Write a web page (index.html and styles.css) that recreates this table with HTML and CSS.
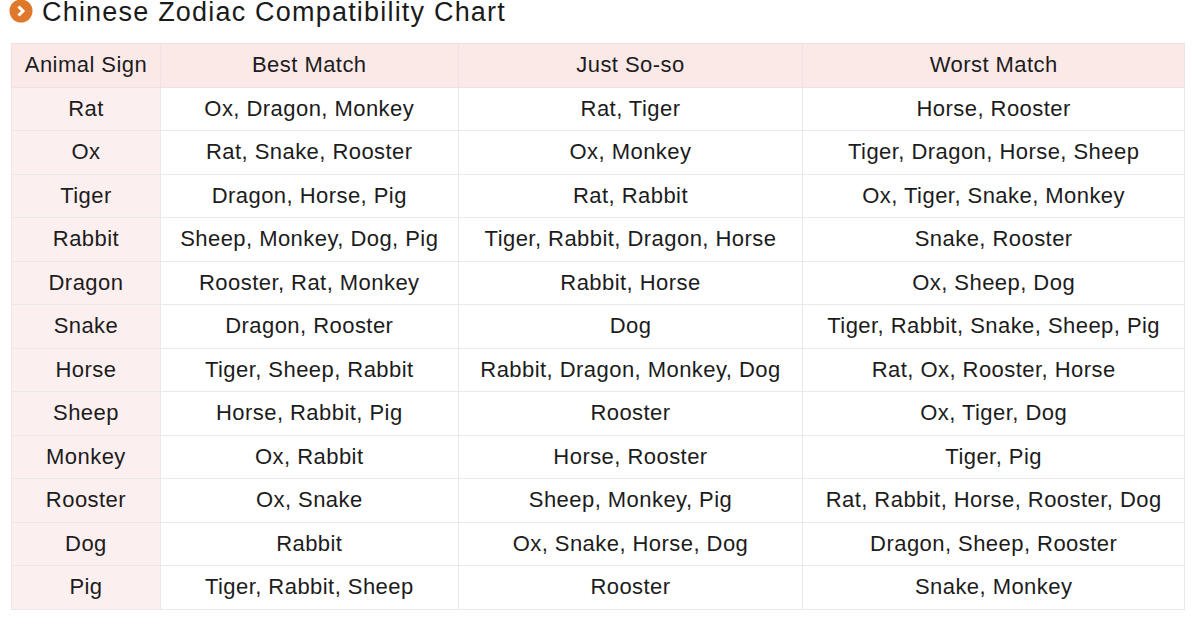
FILE: index.html
```html
<!DOCTYPE html>
<html>
<head>
<meta charset="utf-8">
<link rel="stylesheet" href="styles.css">
</head>
<body>
<div class="page">
  <h2 class="title">
    <svg class="icon" width="24" height="24" viewBox="0 0 24 24"><circle cx="12" cy="12" r="11.5" fill="#e0782c"/><path d="M9.5 7.5 L14 12 L9.5 16.5" fill="none" stroke="#fff" stroke-width="3"/></svg>
    <span>Chinese Zodiac Compatibility Chart</span>
  </h2>
  <table class="chart">
    <colgroup><col class="c1"><col class="c2"><col class="c3"><col class="c4"></colgroup>
    <thead>
      <tr><th>Animal Sign</th><th>Best Match</th><th>Just So-so</th><th>Worst Match</th></tr>
    </thead>
    <tbody>
      <tr><td>Rat</td><td>Ox, Dragon, Monkey</td><td>Rat, Tiger</td><td>Horse, Rooster</td></tr>
      <tr><td>Ox</td><td>Rat, Snake, Rooster</td><td>Ox, Monkey</td><td>Tiger, Dragon, Horse, Sheep</td></tr>
      <tr><td>Tiger</td><td>Dragon, Horse, Pig</td><td>Rat, Rabbit</td><td>Ox, Tiger, Snake, Monkey</td></tr>
      <tr><td>Rabbit</td><td>Sheep, Monkey, Dog, Pig</td><td>Tiger, Rabbit, Dragon, Horse</td><td>Snake, Rooster</td></tr>
      <tr><td>Dragon</td><td>Rooster, Rat, Monkey</td><td>Rabbit, Horse</td><td>Ox, Sheep, Dog</td></tr>
      <tr><td>Snake</td><td>Dragon, Rooster</td><td>Dog</td><td>Tiger, Rabbit, Snake, Sheep, Pig</td></tr>
      <tr><td>Horse</td><td>Tiger, Sheep, Rabbit</td><td>Rabbit, Dragon, Monkey, Dog</td><td>Rat, Ox, Rooster, Horse</td></tr>
      <tr><td>Sheep</td><td>Horse, Rabbit, Pig</td><td>Rooster</td><td>Ox, Tiger, Dog</td></tr>
      <tr><td>Monkey</td><td>Ox, Rabbit</td><td>Horse, Rooster</td><td>Tiger, Pig</td></tr>
      <tr><td>Rooster</td><td>Ox, Snake</td><td>Sheep, Monkey, Pig</td><td>Rat, Rabbit, Horse, Rooster, Dog</td></tr>
      <tr><td>Dog</td><td>Rabbit</td><td>Ox, Snake, Horse, Dog</td><td>Dragon, Sheep, Rooster</td></tr>
      <tr><td>Pig</td><td>Tiger, Rabbit, Sheep</td><td>Rooster</td><td>Snake, Monkey</td></tr>
    </tbody>
  </table>
</div>
</body>
</html>
```

FILE: styles.css
```css
html, body {
  margin: 0;
  padding: 0;
  background: #ffffff;
}
.page {
  font-family: "Liberation Sans", Arial, sans-serif;
  color: #1c1c1c;
}
.title {
  display: flex;
  align-items: center;
  gap: 9px;
  margin: 0 0 0 9px;
  height: 24px;
  font-size: 27px;
  letter-spacing: 1.2px;
  font-weight: normal;
  color: #1a1a1a;
  line-height: 24px;
}
.title .icon {
  flex: none;
  margin-top: -2px;
}
.chart {
  margin: 19px 0 0 11px;
  border-collapse: collapse;
  width: 1174px;
  font-size: 22px;
  letter-spacing: 0.45px;
  border: 1px solid #e6e3e3;
}
.c1 { width: 149px; }
.c2 { width: 298px; }
.c3 { width: 345px; }
.c4 { width: 382px; }
.chart th, .chart td {
  height: 42.5px;
  padding: 0;
  text-align: center;
  font-weight: normal;
  border: 1px solid #ebe8e8;
  color: #1c1c1c;
}
.chart thead th {
  background: #fbe9e8;
  border-color: #f1e2e1;
}
.chart tbody td:first-child {
  background: #fcefef;
}
```
